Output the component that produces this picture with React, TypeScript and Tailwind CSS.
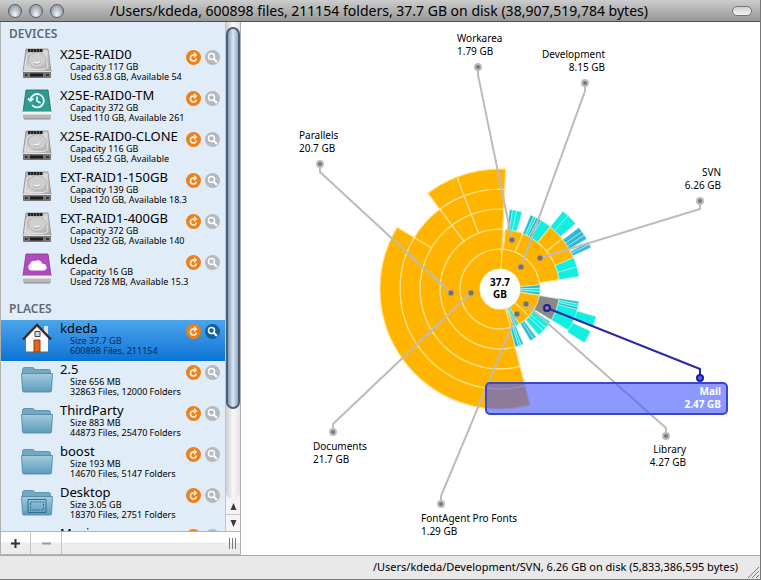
import { useState } from 'react';

type IconKind = 'drive' | 'timemachine' | 'cloud' | 'home' | 'folder' | 'desktop';

type Entry = {
  name: string;
  icon: IconKind;
  lines: [string, string];
};

const devices: Entry[] = [
  { name: 'X25E-RAID0', icon: 'drive', lines: ['Capacity 117 GB', 'Used 63.8 GB, Available 54'] },
  { name: 'X25E-RAID0-TM', icon: 'timemachine', lines: ['Capacity 372 GB', 'Used 110 GB, Available 261'] },
  { name: 'X25E-RAID0-CLONE', icon: 'drive', lines: ['Capacity 116 GB', 'Used 65.2 GB, Available'] },
  { name: 'EXT-RAID1-150GB', icon: 'drive', lines: ['Capacity 139 GB', 'Used 120 GB, Available 18.3'] },
  { name: 'EXT-RAID1-400GB', icon: 'drive', lines: ['Capacity 372 GB', 'Used 232 GB, Available 140'] },
  { name: 'kdeda', icon: 'cloud', lines: ['Capacity 16 GB', 'Used 728 MB, Available 15.3'] },
];

const places: Entry[] = [
  { name: 'kdeda', icon: 'home', lines: ['Size 37.7 GB', '600898 Files, 211154'] },
  { name: '2.5', icon: 'folder', lines: ['Size 656 MB', '32863 Files, 12000 Folders'] },
  { name: 'ThirdParty', icon: 'folder', lines: ['Size 883 MB', '44873 Files, 25470 Folders'] },
  { name: 'boost', icon: 'folder', lines: ['Size 193 MB', '14670 Files, 5147 Folders'] },
  { name: 'Desktop', icon: 'desktop', lines: ['Size 3.05 GB', '18370 Files, 2751 Folders'] },
  { name: 'Movies', icon: 'folder', lines: ['', ''] },
];

function EntryIcon({ kind }: { kind: IconKind }) {
  if (kind === 'drive') {
    return (
      <svg width="32" height="34" viewBox="0 0 32 34" aria-hidden="true">
        <defs>
          <linearGradient id="driveTop" x1="0" y1="0" x2="1" y2="1">
            <stop offset="0" stopColor="#a9a9a9" />
            <stop offset="0.5" stopColor="#d6d6d6" />
            <stop offset="1" stopColor="#a2a2a2" />
          </linearGradient>
        </defs>
        <path d="M5 3h22l3 23H2z" fill="url(#driveTop)" stroke="#8b8b8b" strokeWidth="0.8" />
        <path d="M2 25h28v6a1 1 0 0 1-1 1H3a1 1 0 0 1-1-1z" fill="#757575" />
        <path d="M2 25.500h28" stroke="#e4e4e4" />
        <path d="M7 4.500h15" stroke="#222" strokeWidth="3" strokeDasharray="2.500 .4" />
        <path d="M24 5.500l3 16-5 2H9l-5-2 2-13 5-1" fill="none" stroke="#e6e6e6" strokeWidth="0.9" />
        <ellipse cx="16" cy="14" rx="9" ry="7.500" fill="#cfcfcf" stroke="#a8a8a8" strokeWidth="0.7" />
        <path d="M13 16.500q3 2 6-.5" fill="none" stroke="#fff" strokeWidth="1.800" />
        <path d="M13 17.500q3 2 6.500-1" fill="none" stroke="#8a8a8a" strokeWidth="0.8" />
        <path d="M9 29h13" stroke="#1c1c1c" strokeWidth="3" />
        <path d="M4 29h2.500M25 29h3" stroke="#333" strokeWidth="2" />
      </svg>
    );
  }
  if (kind === 'timemachine' || kind === 'cloud') {
    return (
      <svg width="32" height="34" viewBox="0 0 32 34" aria-hidden="true">
        <path d="M5 3h22l3 22H2z" fill={kind === 'cloud' ? '#b04ac0' : '#2f9a92'} stroke={kind === 'cloud' ? '#7d3290' : '#1c6d68'} strokeWidth="0.8" />
        <path d="M2 25h28v6a1 1 0 0 1-1 1H3a1 1 0 0 1-1-1z" fill="#b9b9b9" />
        <path d="M2 24.500h28v3H2z" fill="#f4f4f4" />
        <path d="M3 32h26" stroke="#888" />
        {kind === 'cloud' ? (
          <path d="M10 19.500a3.500 3.500 0 0 1-1-6.500 4 4 0 0 1 5-3 5 5 0 0 1 7.500 3 3.300 3.300 0 0 1 1.500 6.500z" fill="#fff" />
        ) : (
          <g fill="none" stroke="#e9fbfa" strokeWidth="1.800">
            <path d="M9.500 13a6.700 6.700 0 1 1 1.500 5" />
            <path d="M7 11.500l2.500 2.500 3-2.500M16 9.500v4.500l3.500 2" />
          </g>
        )}
      </svg>
    );
  }
  if (kind === 'home') {
    return (
      <svg width="32" height="34" viewBox="0 0 32 34" aria-hidden="true">
        <path d="M23 6h4v8h-4z" fill="#d9e4ea" />
        <path d="M5 17L16 6l11 11v15H5z" fill="#fbfaf6" />
        <path d="M2 19.500L16 5l14 14.500" fill="none" stroke="#3d2922" strokeWidth="2.500" />
        <path d="M13 20h6v12h-6z" fill="#e0651e" stroke="#9a3b10" />
        <path d="M14 11.500h5v5h-5z" fill="#cde" stroke="#444" />
        <path d="M4 32h24" stroke="#6b665f" />
      </svg>
    );
  }
  return (
    <svg width="32" height="34" viewBox="0 0 32 34" aria-hidden="true">
      <defs>
        <linearGradient id="folderFace" x1="0" y1="0" x2="0" y2="1">
          <stop offset="0" stopColor="#a3cbdf" />
          <stop offset="1" stopColor="#5b9cba" />
        </linearGradient>
      </defs>
      <path d="M1.500 8.500a2 2 0 0 1 2-2h8a2 2 0 0 1 2 2h14a2 2 0 0 1 2 2V15h-28z" fill="#72aac4" stroke="#5289a3" strokeWidth="0.8" />
      <path d="M.5 12.500h31l-1 17a1.500 1.500 0 0 1-1.500 1.500H3a1.500 1.500 0 0 1-1.500-1.500z" fill="url(#folderFace)" stroke="#4a849f" strokeWidth="0.8" />
      {kind === 'desktop' && (
        <g fill="none" stroke="#2f6f8d">
          <path d="M7 15.500h18v13H7z" />
          <path d="M9.500 18h13v8h-13z" strokeDasharray="2 1" />
        </g>
      )}
    </svg>
  );
}

function EntryRow({ entry, selected, onSelect }: { entry: Entry; selected: boolean; onSelect: () => void }) {
  return (
    <li
      onClick={onSelect}
      className={
        selected
          ? 'flex h-[41px] shrink-0 bg-linear-to-b from-[#4aa5ea] to-[#0573d6] pl-5'
          : 'flex h-[41px] shrink-0 pl-5'
      }
    >
      <div className="w-8 shrink-0">
        <EntryIcon kind={entry.icon} />
      </div>
      <div className="min-w-0 flex-1 whitespace-nowrap pl-[7px]">
        <p className="text-[13px] leading-4">{entry.name}</p>
        <p className={selected ? 'pl-[10px] text-[9px] leading-[10px] text-[#06285c]' : 'pl-[10px] text-[9px] leading-[10px]'}>
          {entry.lines[0]}
          <br />
          {entry.lines[1]}
        </p>
      </div>
      <div className="-ml-10 flex shrink-0 items-start gap-1 pr-[5px] pt-1">
        <button aria-label={'Rescan ' + entry.name} className="flex size-[15px] items-center justify-center rounded-full bg-[#ee7f1a]">
          <svg width="11" height="11" viewBox="0 0 11 11" fill="none" stroke="#fff3dd" strokeWidth="1.500" aria-hidden="true">
            <path d="M8 3H5.200a3 3 0 1 0 3.200 3.500" />
            <path d="M6 .8L8.200 3 6 5.200" />
          </svg>
        </button>
        <button
          aria-label={'Reveal ' + entry.name}
          className={
            selected
              ? 'flex size-[15px] items-center justify-center rounded-full bg-[#13609f]'
              : 'flex size-[15px] items-center justify-center rounded-full bg-[#b5b9bd]'
          }
        >
          <svg width="11" height="11" viewBox="0 0 11 11" fill="none" stroke="#fff" strokeWidth="1.500" aria-hidden="true">
            <circle cx="4.500" cy="4.500" r="3" />
            <path d="M6.700 6.700l3.300 3.300" strokeWidth="2" />
          </svg>
        </button>
      </div>
    </li>
  );
}

function Scrollbar() {
  return (
    <div className="flex w-[15px] shrink-0 flex-col border-l border-[#c5c5c5] bg-[#f4f4f4]" aria-hidden="true">
      <div className="flex-1 rounded-b-full bg-linear-to-r from-[#cfcfcf] via-[#f8f8f8] to-[#e2e2e2] pt-[5px]">
        <div className="h-[81%] rounded-full border-2 border-[#4a5f73] bg-linear-to-r from-[#7f9db9] via-[#dbe9f6] to-[#8eabc6]" />
      </div>
      <div className="flex h-4 items-center justify-center border-b border-[#c5c5c5]">
        <svg width="7" height="7" viewBox="0 0 7 7">
          <path d="M3.500 0L6.500 7h-6z" fill="#3b3b3b" />
        </svg>
      </div>
      <div className="flex h-4 items-center justify-center">
        <svg width="7" height="7" viewBox="0 0 7 7">
          <path d="M3.500 7L6.500 0h-6z" fill="#3b3b3b" />
        </svg>
      </div>
    </div>
  );
}

// ring 1 starts at the hub; every ring is 20 units thick
const RING = 20;

type Slice = { ring: number; from: number; to: number; fill: string };

const ORANGE = '#ffb500';
const CYAN = '#12efe0';
const BLUE = '#2fb9d6';

const slices: Slice[] = [
  // Documents and Parallels
  { ring: 1, from: 164, to: 363, fill: ORANGE },
  { ring: 2, from: 165, to: 363, fill: ORANGE },
  { ring: 3, from: 165.5, to: 323, fill: ORANGE },
  { ring: 3, from: 323, to: 339, fill: ORANGE },
  { ring: 3, from: 339, to: 362.7, fill: ORANGE },
  { ring: 4, from: 165.5, to: 301, fill: ORANGE },
  { ring: 4, from: 301, to: 323, fill: ORANGE },
  { ring: 4, from: 323, to: 339, fill: ORANGE },
  { ring: 4, from: 339, to: 362.7, fill: ORANGE },
  { ring: 5, from: 165.5, to: 301, fill: ORANGE },
  { ring: 5, from: 323, to: 339, fill: ORANGE },
  { ring: 5, from: 339, to: 362.7, fill: ORANGE },
  // Development
  { ring: 1, from: 3, to: 84, fill: ORANGE },
  { ring: 2, from: 5, to: 22.5, fill: ORANGE },
  { ring: 2, from: 22.5, to: 81, fill: ORANGE },
  { ring: 3, from: 7, to: 9, fill: BLUE },
  { ring: 3, from: 9, to: 12, fill: CYAN },
  { ring: 3, from: 12, to: 16, fill: CYAN },
  { ring: 3, from: 22.5, to: 25, fill: BLUE },
  { ring: 3, from: 25, to: 27, fill: CYAN },
  { ring: 3, from: 27, to: 29, fill: BLUE },
  { ring: 3, from: 29, to: 31, fill: BLUE },
  { ring: 3, from: 31, to: 39, fill: CYAN },
  { ring: 3, from: 39, to: 51, fill: ORANGE },
  { ring: 3, from: 51, to: 67, fill: ORANGE },
  { ring: 3, from: 67, to: 74, fill: CYAN },
  { ring: 3, from: 74, to: 81, fill: CYAN },
  { ring: 4, from: 39, to: 43, fill: CYAN },
  { ring: 4, from: 43, to: 49, fill: CYAN },
  { ring: 4, from: 52, to: 55, fill: BLUE },
  { ring: 4, from: 55, to: 57.5, fill: BLUE },
  { ring: 4, from: 57.5, to: 60, fill: BLUE },
  { ring: 4, from: 62, to: 63.5, fill: BLUE },
  { ring: 4, from: 63.5, to: 65.5, fill: BLUE },
  // Library
  { ring: 1, from: 84, to: 89, fill: BLUE },
  { ring: 1, from: 89, to: 94, fill: CYAN },
  { ring: 1, from: 94, to: 99, fill: BLUE },
  { ring: 1, from: 99, to: 133, fill: ORANGE },
  { ring: 2, from: 99.5, to: 121, fill: '#8c8887' },
  { ring: 2, from: 123, to: 130, fill: CYAN },
  { ring: 2, from: 130, to: 134, fill: CYAN },
  { ring: 2, from: 134, to: 140, fill: CYAN },
  { ring: 3, from: 99, to: 101, fill: BLUE },
  { ring: 3, from: 101, to: 103, fill: CYAN },
  { ring: 3, from: 103, to: 105, fill: BLUE },
  { ring: 3, from: 105, to: 112, fill: CYAN },
  { ring: 3, from: 112, to: 121, fill: CYAN },
  { ring: 4, from: 106, to: 112, fill: CYAN },
  { ring: 4, from: 115, to: 122.5, fill: CYAN },
  // FontAgent Pro Fonts and small leftovers
  { ring: 1, from: 133, to: 152, fill: ORANGE },
  { ring: 1, from: 152, to: 157, fill: CYAN },
  { ring: 1, from: 157, to: 160, fill: BLUE },
  { ring: 1, from: 160, to: 164, fill: ORANGE },
  { ring: 2, from: 143, to: 146, fill: BLUE },
  { ring: 2, from: 146, to: 149.5, fill: BLUE },
  { ring: 2, from: 157, to: 159.5, fill: BLUE },
  { ring: 2, from: 159.5, to: 162, fill: CYAN },
  { ring: 2, from: 162, to: 165, fill: BLUE },
];

function arcPath({ ring, from, to }: Slice) {
  const inner = ring * RING;
  const outer = inner + RING;
  const at = (r: number, deg: number) => {
    const a = (deg * Math.PI) / 180;
    return `${(r * Math.sin(a)).toFixed(2)} ${(-r * Math.cos(a)).toFixed(2)}`;
  };
  const large = to - from > 180 ? 1 : 0;
  return `M${at(inner, from)}L${at(outer, from)}A${outer} ${outer} 0 ${large} 1 ${at(outer, to)}L${at(inner, to)}A${inner} ${inner} 0 ${large} 0 ${at(inner, from)}Z`;
}

// leader lines run from the label pin through an elbow to a slice
const callouts = [
  { name: 'Workarea', size: '1.79 GB', x: -43, y: -247, anchor: 'start', pin: [-22, -222], elbow: -214, end: [12, -49] },
  { name: 'Development', size: '8.15 GB', x: 105, y: -231, anchor: 'end', pin: [85, -206], elbow: -198, end: [21, -22] },
  { name: 'Parallels', size: '20.7 GB', x: -201, y: -150, anchor: 'start', pin: [-180, -125], elbow: -117, end: [-49, 4] },
  { name: 'SVN', size: '6.26 GB', x: 221, y: -113, anchor: 'end', pin: [200, -88], elbow: -80, end: [40, -31] },
  { name: 'Documents', size: '21.7 GB', x: -187, y: 161, anchor: 'start', pin: [-167, 143], elbow: 135, end: [-29, 4] },
  { name: 'FontAgent Pro Fonts', size: '1.29 GB', x: -79, y: 233, anchor: 'start', pin: [-59, 215], elbow: 207, end: [17, 25] },
  { name: 'Library', size: '4.27 GB', x: 186, y: 164, anchor: 'end', pin: [166, 147], elbow: 139, end: [26, 15] },
] as const;

function DiskChart() {
  return (
    <svg width="519" height="533" viewBox="-259 -267 519 533" fontSize="10" role="img" aria-label="Disk usage of /Users/kdeda">
      {slices.map((s, i) => (
        <path key={i} d={arcPath(s)} fill={s.fill} stroke={s.fill === ORANGE ? '#ffe08c' : '#b8f6ee'} strokeWidth={s.fill === ORANGE ? 1.2 : 0.6} />
      ))}
      <circle r="20" fill="#fff" />
      <g fontWeight="bold" textAnchor="middle">
        <text y="-3">37.7</text>
        <text y="9">GB</text>
      </g>

      {callouts.map((c) => (
        <g key={c.name}>
          <path d={`M${c.pin[0]} ${c.pin[1]}V${c.elbow}L${c.end[0]} ${c.end[1]}`} fill="none" stroke="#bcbcbc" strokeWidth="2" />
          <circle cx={c.pin[0]} cy={c.pin[1]} r="3" fill="#777" stroke="#bcbcbc" strokeWidth="2" />
          <circle cx={c.end[0]} cy={c.end[1]} r="3" fill="#77706a" stroke="#c0a671" strokeWidth="1" />
          <text x={c.x} y={c.y} textAnchor={c.anchor}>{c.name}</text>
          <text x={c.x} y={c.y + 13} textAnchor={c.anchor}>{c.size}</text>
        </g>
      ))}

      <g>
        <rect x="-14" y="94" width="241" height="31" rx="4" fill="#4155ff" fillOpacity="0.6" stroke="#3a48c4" strokeWidth="2" />
        <path d="M200 89V80L47 19" fill="none" stroke="#2a2aa5" strokeWidth="2" />
        <circle cx="200" cy="89" r="3" fill="#5560ff" stroke="#1d1d96" strokeWidth="2" />
        <circle cx="47" cy="19" r="3" fill="#8c8887" stroke="#1d1d96" strokeWidth="2" />
        <g fill="#fff" fontWeight="bold" textAnchor="end">
          <text x="221" y="106">Mail</text>
          <text x="221" y="119">2.47 GB</text>
        </g>
      </g>
    </svg>
  );
}

export default function App() {
  const [selected, setSelected] = useState('place-0');

  return (
    <div className="flex h-screen flex-col overflow-hidden border-r border-b border-[#777] bg-[#e9e9e9] font-['Noto_Sans',sans-serif] text-black">
      <header className="flex h-[22px] shrink-0 items-center border-b border-[#4f4f4f] bg-linear-to-b from-[#cdcdcd] to-[#979797] px-2">
        <div className="flex gap-[7px]">
          {['Close', 'Minimize', 'Zoom'].map((label) => (
            <button
              key={label}
              aria-label={label}
              className="size-[14px] rounded-full border border-[#555d68] bg-radial-[at_50%_80%] from-[#f3f6fa] to-[#77818e]"
            />
          ))}
        </div>
        <h1 className="min-w-0 flex-1 whitespace-nowrap pl-[46px] text-[14px] leading-5">
          /Users/kdeda, 600898 files, 211154 folders, 37.7 GB on disk (38,907,519,784 bytes)
        </h1>
        <button aria-label="Toggle toolbar" className="h-[10px] w-5 rounded-full border border-[#777] bg-linear-to-b from-[#d0d0d0] to-[#f4f4f4]" />
      </header>

      <div className="flex min-h-0 flex-1">
        <aside className="flex w-[241px] shrink-0 flex-col border-r border-l border-[#b0b0b0]">
          <div className="flex min-h-0 flex-1">
            <nav className="min-w-0 flex-1 overflow-hidden bg-[#e0ecf8]">
              <h2 className="h-6 pl-2 pt-[2px] text-xs leading-5 font-semibold text-[#626870]">DEVICES</h2>
              <ul>
                {devices.map((d, i) => (
                  <EntryRow key={i} entry={d} selected={selected === 'device-' + i} onSelect={() => setSelected('device-' + i)} />
                ))}
              </ul>
              <h2 className="h-7 pl-2 pt-[7px] text-xs leading-5 font-semibold text-[#626870]">PLACES</h2>
              <ul>
                {places.map((p, i) => (
                  <EntryRow key={i} entry={p} selected={selected === 'place-' + i} onSelect={() => setSelected('place-' + i)} />
                ))}
              </ul>
            </nav>
            <Scrollbar />
          </div>
          <div className="flex h-6 shrink-0 items-stretch border-t border-b border-[#b5b5b5] bg-linear-to-b from-white from-45% to-[#ececec] to-50%">
            <button aria-label="Add" className="flex w-[30px] items-center justify-center border-r border-[#c4c4c4]">
              <svg width="9" height="9" viewBox="0 0 9 9" stroke="#333" strokeWidth="2">
                <path d="M4.500 0v9M0 4.500h9" />
              </svg>
            </button>
            <button aria-label="Remove" className="flex w-[31px] items-center justify-center border-r border-[#c4c4c4]">
              <svg width="9" height="9" viewBox="0 0 9 9" stroke="#9a9a9a" strokeWidth="2">
                <path d="M0 4.500h9" />
              </svg>
            </button>
            <div className="ml-auto flex items-center gap-[2px] pr-1">
              <span className="h-[11px] w-px bg-[#777]" />
              <span className="h-[11px] w-px bg-[#777]" />
              <span className="h-[11px] w-px bg-[#777]" />
            </div>
          </div>
        </aside>

        <main className="flex min-w-0 flex-1 items-center justify-center bg-white">
          <DiskChart />
        </main>
      </div>

      <footer className="flex h-6 shrink-0 items-center justify-end border-t border-[#a8a8a8] text-[11px]">
        <p>/Users/kdeda/Development/SVN, 6.26 GB on disk (5,833,386,595 bytes)</p>
        <svg className="ml-2 self-end" width="14" height="14" viewBox="0 0 14 14" stroke="#777" aria-hidden="true">
          <path d="M2 13L13 2M6 13l7-7M10 13l3-3" />
        </svg>
      </footer>
    </div>
  );
}
